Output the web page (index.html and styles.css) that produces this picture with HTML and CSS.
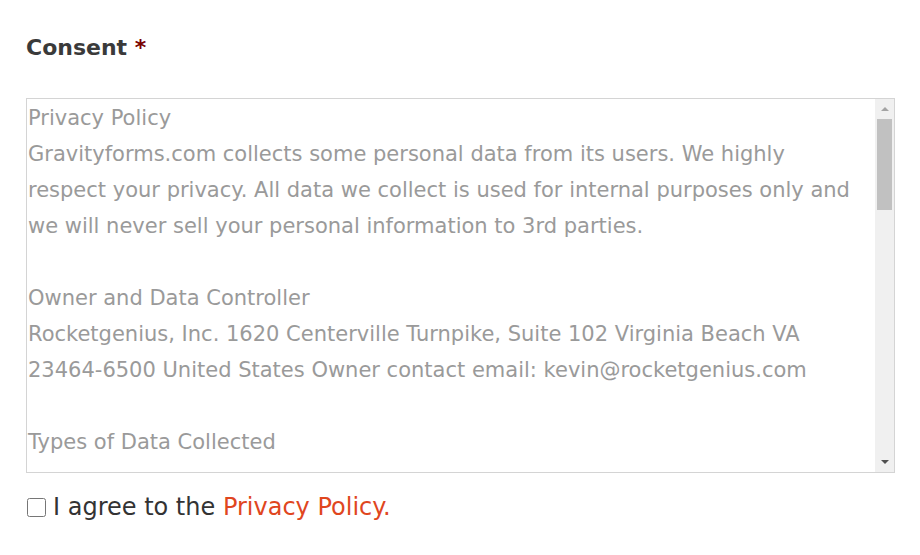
FILE: index.html
```html
<!DOCTYPE html>
<html lang="en">
<head>
    <meta charset="UTF-8">
    <title>Consent</title>
    <link rel="stylesheet" href="styles.css">
</head>
<body>
    <div class="field">
        <h2 class="field-label">Consent <span class="required">*</span></h2>

        <div class="policy-box">
            <div class="policy-text">
                <p>Privacy Policy<br>
                Gravityforms.com collects some personal data from its users. We highly<br>
                respect your privacy. All data we collect is used for internal purposes only and<br>
                we will never sell your personal information to 3rd parties.</p>
                <p>Owner and Data Controller<br>
                Rocketgenius, Inc. 1620 Centerville Turnpike, Suite 102 Virginia Beach VA<br>
                23464-6500 United States Owner contact email: kevin@rocketgenius.com</p>
                <p>Types of Data Collected</p>
            </div>
            <div class="scrollbar">
                <div class="scroll-btn up"></div>
                <div class="scroll-track">
                    <div class="scroll-thumb"></div>
                </div>
                <div class="scroll-btn down"></div>
            </div>
        </div>

        <label class="agree">
            <input type="checkbox">
            <span>I agree to the <a href="#">Privacy Policy.</a></span>
        </label>
    </div>
</body>
</html>
```

FILE: styles.css
```css
body {
    margin: 0;
    background-color: #fff;
    font-family: "DejaVu Sans", sans-serif;
}

.field {
    padding: 30px 26px 0 26px;
}

.field-label {
    margin: 0 0 32px 0;
    font-size: 22px;
    line-height: 36px;
    font-weight: bold;
    color: #3a3a3a;
}

.required {
    color: #790000;
}

.policy-box {
    display: flex;
    height: 375px;
    border: 1px solid #d4d4d4;
    box-sizing: border-box;
    width: 869px;
}

.policy-text {
    flex: 1;
    overflow: hidden;
    padding: 1px 0 0 1px;
    font-size: 21px;
    line-height: 36px;
    color: #9a9a9a;
    white-space: nowrap;
}

.policy-text p {
    margin: 0 0 36px 0;
}

.scrollbar {
    width: 19px;
    display: flex;
    flex-direction: column;
    background-color: #f0f0f0;
}

.scroll-btn {
    height: 20px;
    display: flex;
    align-items: center;
    justify-content: center;
}

.scroll-btn.up::before {
    content: "";
    border-left: 4px solid transparent;
    border-right: 4px solid transparent;
    border-bottom: 4px solid #a3a3a3;
}

.scroll-btn.down::before {
    content: "";
    border-left: 4px solid transparent;
    border-right: 4px solid transparent;
    border-top: 4px solid #505050;
}

.scroll-track {
    flex: 1;
    padding: 0 2px;
}

.scroll-thumb {
    height: 91px;
    background-color: #c1c1c1;
}

.agree {
    display: flex;
    align-items: center;
    gap: 7px;
    margin-top: 19px;
    font-size: 24px;
    line-height: 30px;
    color: #333;
}

.agree input {
    margin: 0 0 0 1px;
    width: 19px;
    height: 19px;
}

.agree a {
    color: #e0461e;
    text-decoration: none;
}
```
